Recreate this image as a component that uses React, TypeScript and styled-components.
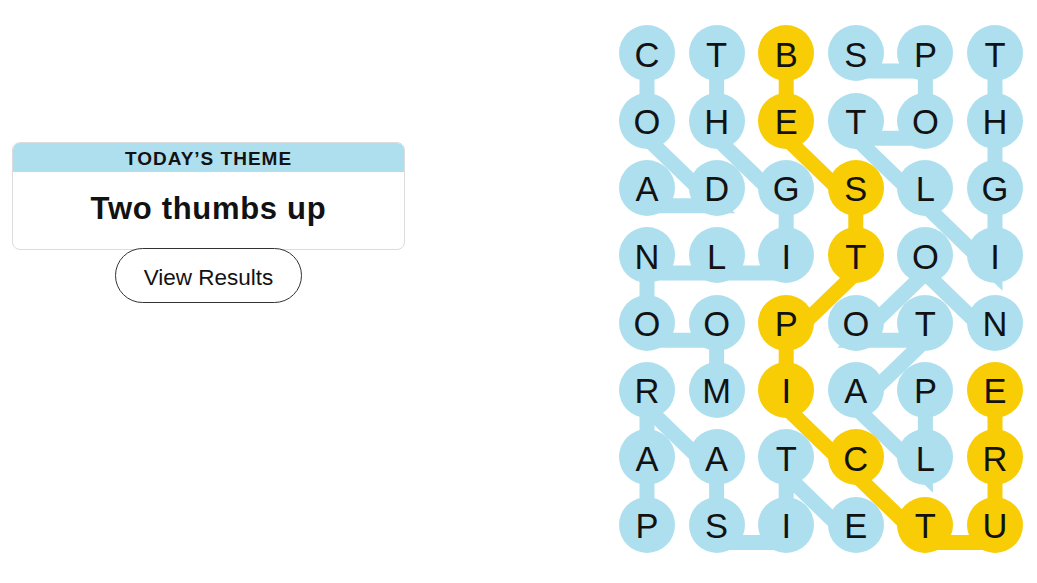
import React from "react";
import styled, { createGlobalStyle } from "styled-components";

const GlobalStyle = createGlobalStyle`
  html, body { margin: 0; padding: 0; background: #ffffff; }
  body { font-family: "Liberation Sans", Arial, sans-serif; color: #121212; }
`;

const BLUE = "#aedfee";
const YELLOW = "#f8cd05";
const CELL = 56;
const COL_GAP = 13.6;
const ROW_GAP = 11.34;
const LINE_OFFSET = 18;

const LETTERS = ["CTBSPT", "OHETOH", "ADGSLG", "NLITOI", "OOPOTN", "RMIAPE", "AATCLR", "PSIETU"];

type Cell = [number, number];

const THEME_WORDS: Cell[][] = [
  [[0, 0], [1, 0], [2, 1], [2, 0]],
  [[5, 1], [4, 1], [4, 0], [3, 0], [3, 1], [3, 2], [2, 2], [1, 1], [0, 1]],
  [[0, 3], [0, 4], [1, 4], [1, 3], [2, 4], [3, 5], [2, 5], [1, 5], [0, 5]],
  [[5, 4], [6, 4], [5, 3], [4, 4], [4, 3], [3, 4], [4, 5]],
  [[7, 0], [6, 0], [5, 0], [6, 1], [7, 1], [7, 2], [6, 2], [7, 3]],
];

const SPANGRAM: Cell[] = [
  [0, 2], [1, 2], [2, 3], [3, 3], [4, 2], [5, 2], [6, 3], [7, 4], [7, 5], [6, 5], [5, 5],
];

const spanSet = new Set(SPANGRAM.map(([r, c]) => `${r}-${c}`));

const cx = (c: number) => CELL / 2 + c * (CELL + COL_GAP);
const cy = (r: number) => CELL / 2 + r * (CELL + ROW_GAP) + LINE_OFFSET;
const pts = (cells: Cell[]) => cells.map(([r, c]) => `${cx(c)},${cy(r)}`).join(" ");

const Page = styled.main`
  display: flex;
  justify-content: space-between;
  align-items: flex-start;
  padding: 25.3px 14px 0 12px;
  box-sizing: border-box;
  width: 1037px;
  height: 583px;
  overflow: hidden;
`;

const SidePanel = styled.section`
  width: 393px;
  padding-top: 116.7px;
  display: flex;
  flex-direction: column;
  align-items: center;
`;

const ThemeCard = styled.div`
  width: 100%;
  box-sizing: border-box;
  border: 1px solid #dcdcdc;
  border-radius: 8px;
  overflow: hidden;
  background: #ffffff;
`;

const ThemeHeader = styled.div`
  height: 30px;
  margin: -1px -1px 0;
  background: ${BLUE};
  display: flex;
  align-items: center;
  justify-content: center;
  padding-top: 5px;
  box-sizing: border-box;
  font-size: 19px;
  font-weight: 700;
  letter-spacing: 1px;
  color: #121212;
`;

const ThemeBody = styled.div`
  height: 77px;
  display: flex;
  align-items: center;
  justify-content: center;
  padding-bottom: 2px;
  box-sizing: border-box;
  font-size: 31px;
  font-weight: 700;
  letter-spacing: 0.7px;
  color: #121212;
`;

const ResultsButton = styled.button`
  margin-top: -2px;
  width: 187px;
  height: 55px;
  border: 1px solid #333333;
  border-radius: 28px;
  background: #ffffff;
  font-family: "Liberation Sans", Arial, sans-serif;
  font-size: 22.5px;
  color: #121212;
  padding: 5px 0 0;
  cursor: pointer;
`;

const Board = styled.div`
  position: relative;
  display: grid;
  grid-template-columns: repeat(6, ${CELL}px);
  grid-auto-rows: ${CELL}px;
  column-gap: ${COL_GAP}px;
  row-gap: ${ROW_GAP}px;
`;

const Connectors = styled.svg`
  position: absolute;
  left: 0;
  top: 0;
  width: 100%;
  height: 100%;
  overflow: visible;
  pointer-events: none;
`;

const LetterCircle = styled.div<{ $found: boolean }>`
  position: relative;
  z-index: 1;
  width: ${CELL}px;
  height: ${CELL}px;
  border-radius: 50%;
  background: ${(p) => (p.$found ? YELLOW : BLUE)};
  display: flex;
  align-items: center;
  justify-content: center;
  padding-top: 3px;
  box-sizing: border-box;
  font-family: "Liberation Sans", Arial, sans-serif;
  font-size: 34.5px;
  line-height: 1;
  color: #121212;
`;

export default function App() {
  return (
    <>
      <GlobalStyle />
      <Page>
        <SidePanel>
          <ThemeCard>
            <ThemeHeader>TODAY’S THEME</ThemeHeader>
            <ThemeBody>Two thumbs up</ThemeBody>
          </ThemeCard>
          <ResultsButton>View Results</ResultsButton>
        </SidePanel>
        <Board>
          <Connectors>
            {THEME_WORDS.map((w, i) => (
              <polyline
                key={i}
                points={pts(w)}
                fill="none"
                stroke={BLUE}
                strokeWidth={15}
                strokeLinejoin="miter"
                strokeLinecap="butt"
              />
            ))}
            <polyline
              points={pts(SPANGRAM)}
              fill="none"
              stroke={YELLOW}
              strokeWidth={15}
              strokeLinejoin="miter"
              strokeLinecap="butt"
            />
          </Connectors>
          {LETTERS.map((row, r) =>
            row.split("").map((ch, c) => (
              <LetterCircle key={`${r}-${c}`} $found={spanSet.has(`${r}-${c}`)}>
                {ch}
              </LetterCircle>
            ))
          )}
        </Board>
      </Page>
    </>
  );
}
